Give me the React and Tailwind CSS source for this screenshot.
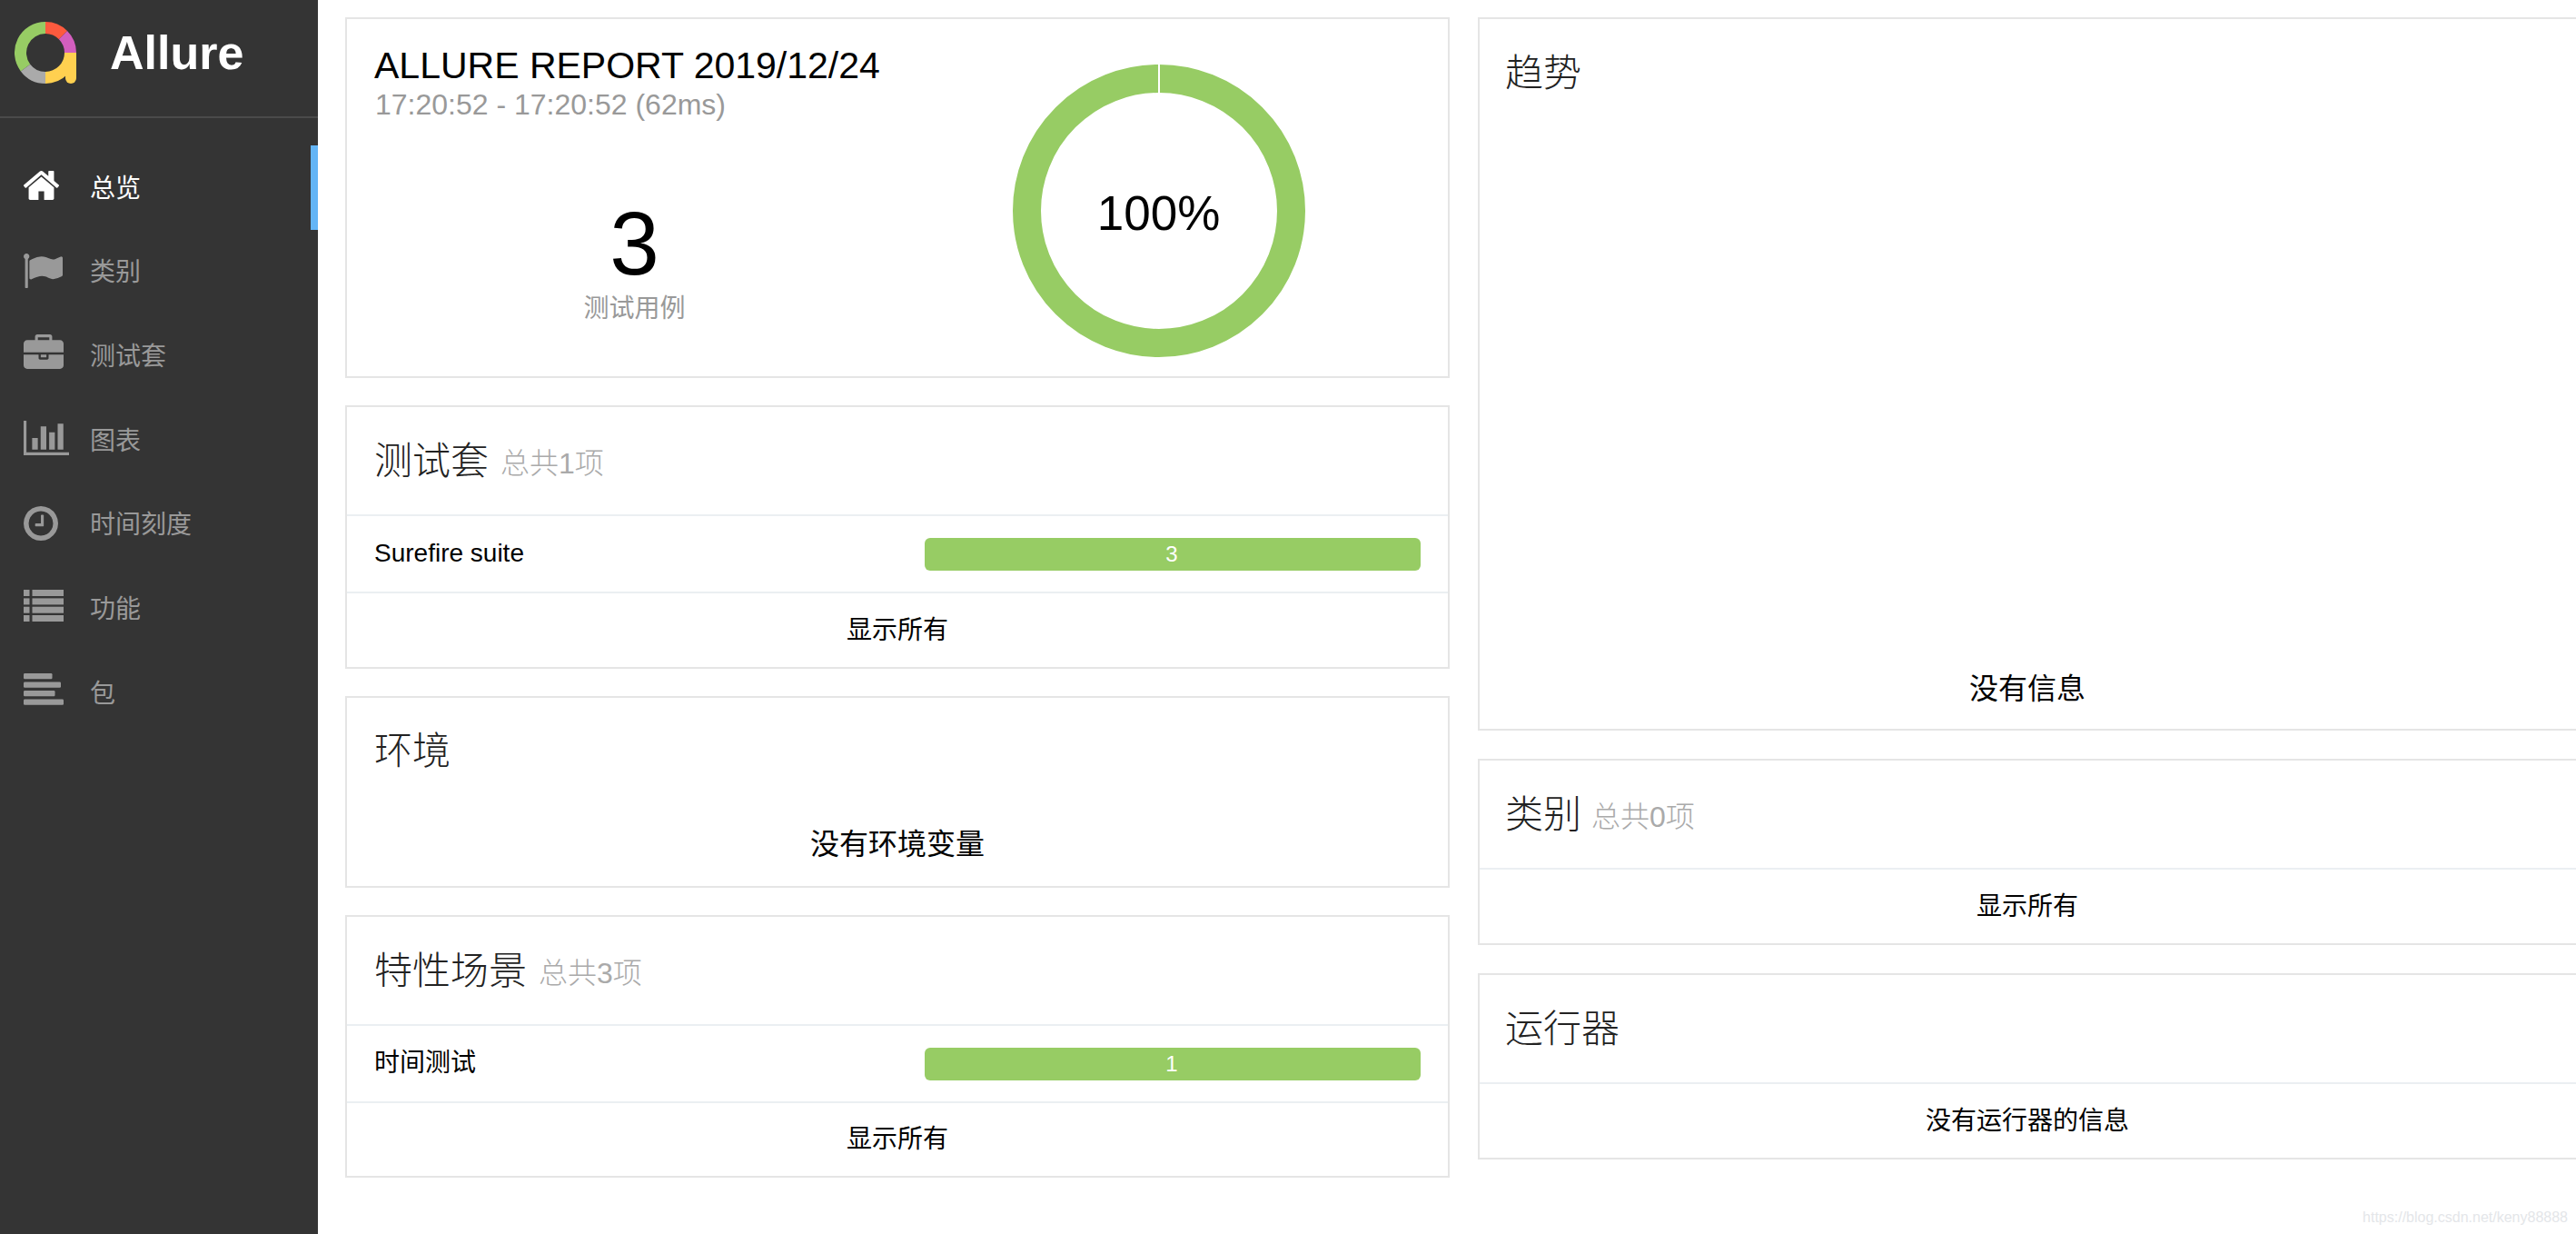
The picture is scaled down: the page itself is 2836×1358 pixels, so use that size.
import React from "react";

const FA = {
  home: { vb: "90 253 1612 1283", d: "M1472 992v480q0 26-19 45t-45 19h-384v-384h-256v384h-384q-26 0-45-19t-19-45v-480q0-1 .5-3t.5-3l575-474 575 474q1 2 1 6zm223-69l-62 74q-8 9-21 11h-3q-13 0-21-7l-692-577-692 577q-12 8-24 7-13-2-21-11l-62-74q-8-10-7-23.5t11-21.5l719-599q32-26 76-26t76 26l244 204v-195q0-14 9-23t23-9h192q14 0 23 9t9 23v408l219 182q10 8 11 21.5t-7 23.5z" },
  flag: { vb: "64 128 1728 1536", d: "M320 256q0 72-64 110v1266q0 13-9.5 22.5t-22.5 9.5h-64q-13 0-22.5-9.5t-9.5-22.5v-1266q-64-38-64-110 0-53 37.5-90.5t90.5-37.5 90.5 37.5 37.5 90.5zm1472 64v763q0 25-12.5 38.5t-39.5 27.5q-215 116-369 116-61 0-123.5-22t-108.5-48-115.5-48-142.5-22q-192 0-464 146-17 9-33 9-26 0-45-19t-19-45v-742q0-32 31-55 21-14 79-43 236-120 421-120 107 0 200 29t219 88q38 19 88 19 54 0 117.5-21t110-47 88-47 54.5-21q26 0 45 19t19 45z" },
  brief: { vb: "0 0 1792 1536", d: "M640 256h512v-128h-512v128zm1152 640v480q0 66-47 113t-113 47h-1472q-66 0-113-47t-47-113v-480h672v160q0 26 19 45t45 19h320q26 0 45-19t19-45v-160h672zm-768 0v128h-256v-128h256zm768-480v384h-1792v-384q0-66 47-113t113-47h352v-160q0-40 28-68t68-28h576q40 0 68 28t28 68v160h352q66 0 113 47t47 113z" },
  chart: { vb: "0 128 2048 1536", d: "M640 896v512h-256v-512h256zm384-512v1024h-256v-1024h256zm1024 1152v128h-2048v-1536h128v1408h1920zm-640-896v768h-256v-768h256zm384-384v1152h-256v-1152h256z" },
  clock: { vb: "128 128 1536 1536", d: "M1024 544v448q0 14-9 23t-23 9h-320q-14 0-23-9t-9-23v-64q0-14 9-23t23-9h224v-352q0-14 9-23t23-9h64q14 0 23 9t9 23zm416 352q0-148-73-273t-198-198-273-73-273 73-198 198-73 273 73 273 198 198 273 73 273-73 198-198 73-273zm224 0q0 209-103 385.5t-279.5 279.5-385.5 103-385.5-103-279.5-279.5-103-385.5 103-385.5 279.5-279.5 385.5-103 385.5 103 279.5 279.5 103 385.5z" },
};

function FaIcon({ name, className }) {
  const icon = FA[name];
  return (
    <svg viewBox={icon.vb} preserveAspectRatio="none" className={className} fill="currentColor">
      <path d={icon.d} />
    </svg>
  );
}

function ListIcon({ className }) {
  return (
    <svg viewBox="0 0 44 35" className={className} fill="currentColor">
      {[0, 9.4, 18.7, 28].map((y) => (
        <g key={y}>
          <rect x="0" y={y} width="6.5" height="7" />
          <rect x="9.5" y={y} width="34.5" height="7" />
        </g>
      ))}
    </svg>
  );
}

function AlignIcon({ className }) {
  return (
    <svg viewBox="0 0 44 35" className={className} fill="currentColor">
      <rect x="0" y="0" width="31.5" height="6.3" rx="1.2" />
      <rect x="0" y="9.5" width="41" height="6.3" rx="1.2" />
      <rect x="0" y="19" width="34.5" height="6.3" rx="1.2" />
      <rect x="0" y="28.5" width="44" height="6.3" rx="1.2" />
    </svg>
  );
}

function arc(a0, a1) {
  const p = (a) => {
    const r = (a * Math.PI) / 180;
    return `${(34 + 27.5 * Math.sin(r)).toFixed(2)} ${(34 - 27.5 * Math.cos(r)).toFixed(2)}`;
  };
  return `M${p(a0)} A27.5 27.5 0 ${a1 - a0 > 180 ? 1 : 0} 1 ${p(a1)}`;
}

function Logo() {
  return (
    <svg viewBox="0 0 68 68" className="w-[68px] h-[68px] shrink-0" fill="none" strokeWidth="13">
      <path d={arc(233, 360)} stroke="#97cc64" />
      <path d={arc(180, 233)} stroke="#aaaaaa" />
      <path d={arc(0, 45)} stroke="#fd5a3e" />
      <path d={arc(45, 90)} stroke="#d35ebe" />
      <path d={arc(90, 180)} stroke="#ffd050" />
      <path d="M56 34h12v28a6 6 0 0 1-12 0z" fill="#ffd050" stroke="none" />
    </svg>
  );
}

const NAV = [
  { label: "总览", icon: <FaIcon name="home" className="w-[39px] h-[32px] -mt-[4px]" />, active: true },
  { label: "类别", icon: <FaIcon name="flag" className="w-[43px] h-[38px] -mt-[2px]" /> },
  { label: "测试套", icon: <FaIcon name="brief" className="w-[44px] h-[38px] -mt-[10px]" /> },
  { label: "图表", icon: <FaIcon name="chart" className="w-[50px] h-[38px] -mt-[4px]" /> },
  { label: "时间刻度", icon: <FaIcon name="clock" className="w-[38px] h-[38px] -mt-[2px]" /> },
  { label: "功能", icon: <ListIcon className="w-[44px] h-[35px] -mt-[7px]" /> },
  { label: "包", icon: <AlignIcon className="w-[44px] h-[35px] -mt-[7px]" /> },
];

function Sidebar() {
  return (
    <aside className="w-[350px] shrink-0 bg-[#343434] h-full">
      <div className="h-[130px] border-b-2 border-[#4a4a4a] flex items-center pl-[16px] pb-[12px] gap-[37px]">
        <Logo />
        <span className="text-[52px] leading-[60px] font-bold text-white">Allure</span>
      </div>
      <nav className="pt-[30px]">
        {NAV.map((item) => (
          <div
            key={item.label}
            className={
              item.active
                ? "h-[92.67px] flex items-center pl-[26px] border-r-[8px] border-[#64b5f6] text-white"
                : "h-[92.67px] flex items-center pl-[26px] text-[#999999]"
            }
          >
            <span className="w-[73px] shrink-0 flex items-center">{item.icon}</span>
            <span className="text-[28px] leading-[36px] mt-[3px]">{item.label}</span>
          </div>
        ))}
      </nav>
    </aside>
  );
}

function Card({ className, children }) {
  return <section className={"border-2 border-[#e5e5e5] bg-white " + className}>{children}</section>;
}

function Title({ children, total, divided, right }) {
  return (
    <div
      className={
        "h-[118px] box-content flex items-center " +
        (right ? "pl-[28px] " : "pl-[30px] ") +
        (divided ? "border-b-2 border-[#ebeff2]" : "")
      }
    >
      <h2 className="text-[42px] leading-[50px] font-light text-[#222222] mt-[2px]">{children}</h2>
      {total && (
        <span
          className={
            (right ? "ml-[11px] " : "ml-[13px] ") + "mt-[5px] text-[32px] leading-[50px] font-light text-[#aaaaaa]"
          }
        >
          {total}
        </span>
      )}
    </div>
  );
}

function BarRow({ name, value }) {
  return (
    <div className="h-[85px] border-b-2 border-[#ebeff2] flex items-center pl-[30px] pr-[30px]">
      <span className="flex-1 text-[28px] leading-[36px] text-black -mt-[2px]">{name}</span>
      <div className="w-[546px] h-[36px] rounded-[6px] bg-[#97cc64] flex items-center justify-center pr-[2px] text-[24px] text-white">
        {value}
      </div>
    </div>
  );
}

function ShowAll({ label = "显示所有", h = "h-[81px]" }) {
  return <div className={h + " flex items-center justify-center text-[28px] text-black"}>{label}</div>;
}

function Empty({ label, h }) {
  return <div className={h + " flex items-center justify-center text-[32px] text-black"}>{label}</div>;
}

function Donut() {
  return (
    <div className="relative w-[322px] h-[322px]">
      <svg viewBox="0 0 322 322" className="w-full h-full">
        <circle cx="161" cy="161" r="145.5" fill="none" stroke="#97cc64" strokeWidth="31" />
        <rect x="160" y="0" width="2" height="31" fill="#ffffff" />
      </svg>
      <div className="absolute inset-0 flex items-center justify-center text-[53px] text-black pt-[6px]">100%</div>
    </div>
  );
}

function Summary() {
  return (
    <Card className="h-[397px] flex px-[31px]">
      <div className="w-1/2 pt-[29px]">
        <h1 className="text-[41px] leading-[44px] text-black font-light -ml-[1px]">ALLURE REPORT 2019/12/24</h1>
        <p className="text-[32px] leading-[32px] text-[#999999] mt-[5px]">17:20:52 - 17:20:52 (62ms)</p>
        <div className="text-center pr-[4px] mt-[89px] text-[98px] leading-[96px] text-black">3</div>
        <div className="text-center pr-[4px] mt-[6px] text-[28px] leading-[36px] text-[#999999]">测试用例</div>
      </div>
      <div className="w-1/2 pt-[50px] flex justify-center">
        <Donut />
      </div>
    </Card>
  );
}

export default function App() {
  return (
    <div className="relative w-screen h-screen overflow-hidden flex bg-white font-['Liberation_Sans','Noto_Sans_CJK_SC',sans-serif]">
      <Sidebar />
      <main className="flex-1 min-w-0 flex gap-[31px] pl-[30px] pt-[19px]">
        <div className="w-[1216px] shrink-0 flex flex-col gap-[30px]">
          <Summary />
          <Card className="h-[290px]">
            <Title total="总共1项" divided>测试套</Title>
            <BarRow name="Surefire suite" value="3" />
            <ShowAll />
          </Card>
          <Card className="h-[211px] flex flex-col justify-between">
            <Title>环境</Title>
            <Empty label="没有环境变量" h="h-[94px]" />
          </Card>
          <Card className="h-[289px]">
            <Title total="总共3项" divided>特性场景</Title>
            <BarRow name="时间测试" value="1" />
            <ShowAll h="h-[80px]" />
          </Card>
        </div>
        <div className="w-[1216px] shrink-0 flex flex-col gap-[31px]">
          <Card className="h-[785px] flex flex-col justify-between">
            <Title right>趋势</Title>
            <Empty label="没有信息" h="h-[88px] pr-[6px]" />
          </Card>
          <Card className="h-[205px]">
            <Title right total="总共0项" divided>类别</Title>
            <ShowAll h="h-[81px] pr-[6px]" />
          </Card>
          <Card className="h-[205px]">
            <Title right divided>运行器</Title>
            <ShowAll label="没有运行器的信息" h="h-[81px] pr-[6px]" />
          </Card>
        </div>
      </main>
      <span className="absolute right-[9px] bottom-[8px] text-[16px] leading-[20px] text-[#e4e6e9]">https://blog.csdn.net/keny88888</span>
    </div>
  );
}
